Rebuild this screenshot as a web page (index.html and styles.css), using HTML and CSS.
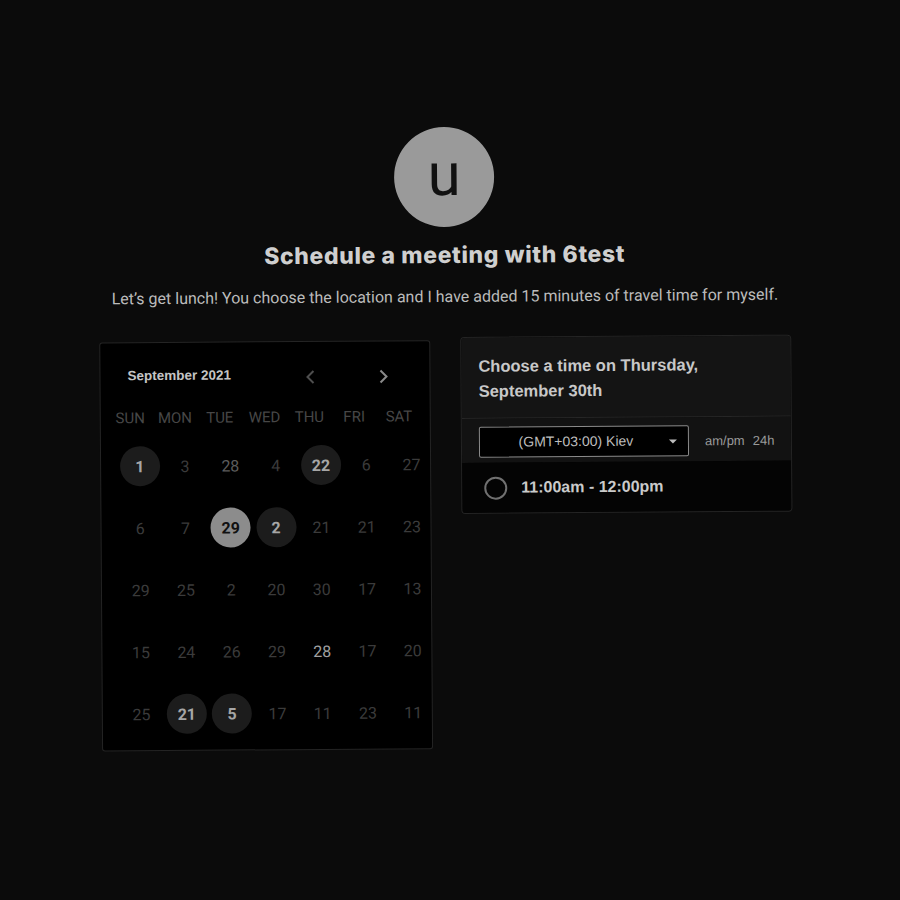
FILE: index.html
```html
<!DOCTYPE html>
<html>
<head>
<meta charset="utf-8">
<link rel="stylesheet" href="styles.css">
</head>
<body>
<div class="page">
  <div class="avatar">u</div>
  <h1 class="title">Schedule a meeting with 6test</h1>
  <p class="subtitle">Let’s get lunch! You choose the location and I have added 15 minutes of travel time for myself.</p>
  <div class="panels">
    <div class="calendar">
      <div class="cal-head">
        <span class="month">September 2021</span>
        <span class="nav prev"><svg width="10" height="16" viewBox="0 0 10 16"><path d="M8 2 L2 8 L8 14" fill="none" stroke="currentColor" stroke-width="2"/></svg></span>
        <span class="nav next"><svg width="10" height="16" viewBox="0 0 10 16"><path d="M2 2 L8 8 L2 14" fill="none" stroke="currentColor" stroke-width="2"/></svg></span>
      </div>
      <div class="weekdays">
        <span>SUN</span><span>MON</span><span>TUE</span><span>WED</span><span>THU</span><span>FRI</span><span>SAT</span>
      </div>
      <div class="days">
        <span class="day avail">1</span><span class="day">3</span><span class="day mid">28</span><span class="day">4</span><span class="day avail">22</span><span class="day">6</span><span class="day">27</span>
        <span class="day">6</span><span class="day">7</span><span class="day selected">29</span><span class="day avail">2</span><span class="day">21</span><span class="day">21</span><span class="day">23</span>
        <span class="day">29</span><span class="day">25</span><span class="day">2</span><span class="day">20</span><span class="day">30</span><span class="day">17</span><span class="day">13</span>
        <span class="day">15</span><span class="day">24</span><span class="day">26</span><span class="day">29</span><span class="day bright">28</span><span class="day">17</span><span class="day">20</span>
        <span class="day">25</span><span class="day avail">21</span><span class="day avail">5</span><span class="day">17</span><span class="day">11</span><span class="day">23</span><span class="day">11</span>
      </div>
    </div>
    <div class="times">
      <div class="times-head">Choose a time on Thursday,<br>September 30th</div>
      <div class="tz-row">
        <div class="tz-select">(GMT+03:00) Kiev<span class="caret"></span></div>
        <div class="fmt"><span>am/pm</span><span>24h</span></div>
      </div>
      <div class="slot">
        <span class="radio"></span>
        <span class="slot-text">11:00am - 12:00pm</span>
      </div>
    </div>
  </div>
</div>
</body>
</html>
```
FILE: styles.css
```css
html, body {
  margin: 0;
  padding: 0;
  background: #0b0b0b;
}
.page {
  width: 900px;
  height: 900px;
  box-sizing: border-box;
  padding: 127px 8px 0 0;
  display: flex;
  flex-direction: column;
  align-items: center;
  transform: rotate(-0.4deg);
  transform-origin: 450px 450px;
  font-family: Roboto, "Liberation Sans", sans-serif;
}
.avatar {
  width: 100px;
  height: 100px;
  border-radius: 50%;
  background: #9a9a9a;
  color: #111;
  font-family: Roboto, sans-serif;
  font-size: 60px;
  line-height: 96px;
  text-align: center;
}
.title {
  margin: 13px 0 0;
  font-family: Inter, Roboto, sans-serif;
  font-size: 23px;
  line-height: 30px;
  font-weight: 800;
  letter-spacing: 0.6px;
  color: #cfcfcf;
}
.subtitle {
  margin: 17px 0 0;
  font-size: 16px;
  line-height: 20px;
  color: #bcbcbc;
}
.panels {
  margin-top: 30px;
  display: flex;
  align-items: flex-start;
  gap: 30px;
}
.calendar {
  width: 331px;
  height: 409px;
  box-sizing: border-box;
  margin-top: 3px;
  background: #000;
  border: 1px solid #242424;
  border-radius: 3px;
}
.cal-head {
  height: 20px;
  margin-top: 22px;
  display: flex;
  align-items: center;
  font-family: "Liberation Sans", Arial, sans-serif;
}
.month {
  margin-left: 27px;
  width: 178px;
  font-size: 13.5px;
  font-weight: 700;
  color: #c4c4c4;
}
.nav {
  display: flex;
  margin-top: 5px;
}
.prev { color: #4e4e4e; }
.next { color: #8a8a8a; margin-left: 63px; }
.weekdays {
  margin-top: 23px;
  padding-left: 7px;
  display: grid;
  grid-template-columns: repeat(7, 44.8px);
  font-size: 15px;
  line-height: 21px;
  color: #474747;
  text-align: center;
}
.days {
  margin-top: 6px;
  padding-left: 16px;
  display: grid;
  grid-template-columns: repeat(7, 45.3px);
  grid-auto-rows: 62px;
  align-items: center;
  justify-items: center;
}
.day {
  width: 40px;
  height: 40px;
  border-radius: 50%;
  display: flex;
  align-items: center;
  justify-content: center;
  font-size: 16px;
  color: #3b3b3b;
}
.day.mid { color: #5c5c5c; }
.day.bright { color: #a0a0a0; }
.day.avail {
  background: #1c1c1c;
  color: #a6a6a6;
  font-weight: 700;
}
.day.selected {
  background: #8c8c8c;
  color: #111;
  font-weight: 700;
}
.times {
  width: 331px;
  box-sizing: border-box;
  border: 1px solid #242424;
  border-radius: 4px;
  overflow: hidden;
  font-family: "Liberation Sans", Arial, sans-serif;
}
.times-head {
  background: #141414;
  padding: 16px 16px 14px 17px;
  font-size: 16.5px;
  line-height: 25px;
  font-weight: 700;
  color: #c8c8c8;
  border-bottom: 1px solid #262626;
}
.tz-row {
  background: #121212;
  padding: 8px 16px 5px 17px;
  display: flex;
  align-items: center;
}
.tz-select {
  position: relative;
  width: 210px;
  height: 31px;
  box-sizing: border-box;
  border: 1px solid #8a8a8a;
  border-radius: 2px;
  background: #000;
  color: #bdbdbd;
  font-size: 14px;
  line-height: 29px;
  text-align: center;
  padding-right: 16px;
}
.caret {
  position: absolute;
  right: 11px;
  top: 13px;
  width: 0;
  height: 0;
  border-left: 4px solid transparent;
  border-right: 4px solid transparent;
  border-top: 4px solid #bdbdbd;
}
.fmt {
  margin-left: 16px;
  display: flex;
  gap: 8px;
  font-size: 13px;
  color: #9a9a9a;
}
.slot {
  background: #040404;
  height: 50px;
  display: flex;
  align-items: center;
  padding-left: 22px;
}
.radio {
  width: 23px;
  height: 23px;
  box-sizing: border-box;
  border: 2px solid #707070;
  border-radius: 50%;
}
.slot-text {
  margin-left: 14px;
  font-size: 16px;
  font-weight: 700;
  color: #cacaca;
}
```
